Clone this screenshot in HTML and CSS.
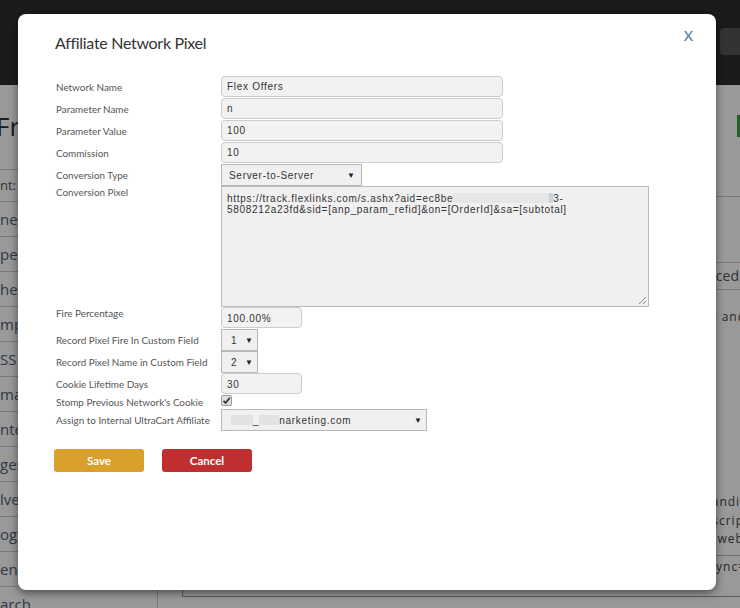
FILE: index.html
```html
<!DOCTYPE html>
<html>
<head>
<meta charset="utf-8">
<link rel="stylesheet" href="styles.css">
</head>
<body>
<div class="page">
  <header class="topbar"><div class="tb-btn"></div></header>
  <div class="layout">
    <aside class="sidebar">
      <div class="sb-title">Fro</div>
      <div class="sb-sub">ST</div>
      <div class="sb-field">nt: <span class="sb-input"></span></div>
      <ul class="sb-menu">
        <li>nera</li><li>pear</li><li>hem</li><li>mp</li><li>SS</li><li>mail</li>
        <li>nter</li><li>ges</li><li>lve</li><li>og F</li><li>enu</li><li>arch</li>
      </ul>
    </aside>
    <main class="main">
      <div class="main-head"><span class="green-btn"></span></div>
      <div class="main-gap"></div>
      <div class="tabs"><span class="tab">Advanced</span></div>
      <div class="main-text">Images and</div>
      <div class="main-lines">
        <div>Custom landing</div>
        <div>Custom scripts</div>
        <div>Custom web pages</div>
      </div>
      <div class="main-sync">Async=</div>
    </main>
  </div>
</div>
<div class="overlay"></div>
<div class="modal">
  <div class="modal-head">
    <h2 class="modal-title">Affiliate Network Pixel</h2>
    <span class="close">X</span>
  </div>
  <div class="form">
    <label class="lbl">Network Name</label>
    <div class="field wide">Flex Offers</div>
    <label class="lbl">Parameter Name</label>
    <div class="field wide">n</div>
    <label class="lbl">Parameter Value</label>
    <div class="field wide">100</div>
    <label class="lbl">Commission</label>
    <div class="field wide">10</div>
    <label class="lbl">Conversion Type</label>
    <div class="select conv"><span>Server-to-Server</span><span class="arrow">▼</span></div>
    <label class="lbl top">Conversion Pixel</label>
    <div class="textarea">https://track.flexlinks.com/s.ashx?aid=ec8be<span class="redact r1"></span><span class="sel"></span>3-<br>5808212a23fd&amp;sid=[anp_param_refid]&amp;on=[OrderId]&amp;sa=[subtotal]<svg class="grip" width="9" height="9" viewBox="0 0 9 9"><path d="M8 1L1 8M8 5L5 8" stroke="#888" stroke-width="1"/></svg></div>
    <label class="lbl top">Fire Percentage</label>
    <div class="field short">100.00%</div>
    <label class="lbl">Record Pixel Fire In Custom Field</label>
    <div class="select tiny"><span>1</span><span class="arrow">▼</span></div>
    <label class="lbl">Record Pixel Name in Custom Field</label>
    <div class="select tiny"><span>2</span><span class="arrow">▼</span></div>
    <label class="lbl">Cookie Lifetime Days</label>
    <div class="field short">30</div>
    <label class="lbl">Stomp Previous Network's Cookie</label>
    <div class="checkrow"><span class="check"><svg width="9" height="9" viewBox="0 0 9 9"><path d="M1.5 4.8L3.6 7L7.8 1.8" fill="none" stroke="#333" stroke-width="1.8"/></svg></span></div>
    <label class="lbl">Assign to Internal UltraCart Affiliate</label>
    <div class="select assign"><span class="assign-val"><span class="redact r2"></span><span class="under">_</span><span class="redact r3"></span>narketing.com</span><span class="arrow">▼</span></div>
  </div>
  <div class="actions">
    <button class="btn save">Save</button>
    <button class="btn cancel">Cancel</button>
  </div>
</div>
</body>
</html>
```

FILE: styles.css
```css
html, body {
  margin: 0;
  padding: 0;
}
body {
  width: 740px;
  height: 608px;
  overflow: hidden;
  background: #fff;
  font-family: "Open Sans", "Liberation Sans", sans-serif;
  position: relative;
}
.page {
  height: 608px;
  display: flex;
  flex-direction: column;
  overflow: hidden;
}
.topbar {
  height: 85px;
  background: #2e2e2e;
  display: flex;
  justify-content: flex-end;
  align-items: flex-start;
  flex-shrink: 0;
}
.tb-btn {
  width: 20px;
  height: 27px;
  margin-top: 28px;
  background: #555;
  border-radius: 4px 0 0 4px;
}
.layout {
  flex: 1;
  display: flex;
  overflow: hidden;
}
.sidebar {
  width: 157px;
  border-right: 1px solid #c8c8c8;
  color: #4f6275;
  overflow: hidden;
}
.sb-title {
  font-size: 26px;
  margin-top: 26px;
  margin-left: -4px;
  color: #333;
  line-height: 30px;
}
.sb-sub {
  font-size: 17px;
  color: #888;
  margin-left: 20px;
  line-height: 22px;
}
.sb-field {
  margin-top: 6px;
  padding: 3px 0 4px;
  border-top: 1px solid #ccc;
  border-bottom: 1px solid #ccc;
  font-size: 13px;
  color: #555;
  display: flex;
  align-items: center;
  gap: 4px;
}
.sb-input {
  width: 120px;
  height: 22px;
  border: 1px solid #aaa;
}
.sb-menu {
  list-style: none;
  margin: 0;
  padding: 0;
  font-size: 15px;
}
.sb-menu li {
  height: 34px;
  line-height: 34px;
  border-bottom: 1px solid #ccc;
}
.main {
  flex: 1;
  overflow: hidden;
  padding-left: 24px;
  display: flex;
  flex-direction: column;
}
.main-head {
  height: 111px;
  border-bottom: 1px solid #ccc;
  display: flex;
  justify-content: flex-end;
  align-items: flex-start;
  margin-left: -24px;
  flex-shrink: 0;
}
.green-btn {
  width: 3px;
  height: 22px;
  margin-top: 30px;
  background: #3aa04a;
}
.main-gap {
  height: 65px;
  border-bottom: 1px solid #ccc;
  margin-left: -24px;
  flex-shrink: 0;
}
.tabs {
  height: 26px;
  border-bottom: 1px solid #ccc;
  display: flex;
  justify-content: flex-end;
  margin-right: -3px;
  flex-shrink: 0;
}
.tab {
  font-size: 14px;
  color: #555;
  line-height: 26px;
  padding: 0 3px;
  border-left: 1px solid #ccc;
  border-right: 1px solid #ccc;
}
.main-text {
  font-size: 12px;
  color: #444;
  letter-spacing: 1px;
  margin-top: 18px;
  text-align: right;
  white-space: nowrap;
  margin-right: -6px;
}
.main-lines {
  margin-top: 168px;
  font-size: 12px;
  letter-spacing: 1px;
  color: #444;
  line-height: 18.5px;
  white-space: nowrap;
  border-bottom: 1px solid #bbb;
  padding-bottom: 6px;
  display: flex;
  flex-direction: column;
  align-items: flex-end;
}
.main-lines div:nth-child(1) { margin-right: -16px; }
.main-lines div:nth-child(2) { margin-right: -16px; }
.main-lines div:nth-child(3) { margin-right: -46px; }
.main-sync {
  font-size: 12px;
  color: #444;
  letter-spacing: 1px;
  white-space: nowrap;
  text-align: right;
  margin-right: -6px;
  padding: 2px 0 21px;
  border-bottom: 1px solid #999;
  border-left: 1px solid #999;
}
.overlay {
  position: absolute;
  inset: 0;
  background: rgba(0, 0, 0, 0.4);
}
.modal {
  position: absolute;
  left: 18px;
  top: 14px;
  width: 698px;
  height: 576px;
  box-sizing: border-box;
  background: #fff;
  border-radius: 8px;
  box-shadow: 0 3px 9px rgba(0, 0, 0, 0.5);
  padding: 0 37px 0 37px;
  font-family: Lato, "Open Sans", sans-serif;
}
.modal-head {
  height: 62px;
  position: relative;
}
.modal-title {
  margin: 0;
  padding-top: 19px;
  font-size: 16px;
  line-height: 20px;
  font-weight: 400;
  color: #333;
  letter-spacing: -0.3px;
}
.close {
  position: absolute;
  right: -14px;
  top: 11px;
  font-size: 15px;
  font-weight: 600;
  color: #6a8aa6;
  font-family: "Open Sans", sans-serif;
}
.form {
  display: grid;
  grid-template-columns: 165px auto;
  row-gap: 0;
  justify-items: start;
  padding-left: 1px;
}
.lbl {
  font-size: 9.9px;
  color: #555;
  align-self: center;
  line-height: 12px;
}
.lbl.top {
  align-self: start;
  padding-top: 0;
}
.field {
  height: 21px;
  margin-bottom: 1px;
  box-sizing: border-box;
  border: 1px solid #ccc;
  border-radius: 4px;
  background: #f2f2f2;
  padding: 0 5px;
  font-family: "Liberation Sans", Arial, sans-serif;
  font-size: 10px;
  color: #333;
  letter-spacing: 0.7px;
  display: flex;
  align-items: center;
}
.field.wide { width: 282px; }
.field.short { width: 81px; padding-top: 1px; }
.select {
  height: 22px;
  box-sizing: border-box;
  border: 1px solid #b8b8b8;
  background: #f0f0f0;
  padding: 0 6px 0 7px;
  font-family: "Liberation Sans", Arial, sans-serif;
  font-size: 10px;
  color: #333;
  letter-spacing: 0.7px;
  display: flex;
  align-items: center;
  justify-content: space-between;
}
.select.conv { width: 141px; }
.select.tiny { width: 37px; padding: 0 4px 0 9px; }
.select.assign { width: 206px; padding-right: 4px; }
.arrow {
  font-size: 8px;
  color: #222;
  letter-spacing: 0;
}
.textarea {
  width: 428px;
  height: 121px;
  box-sizing: border-box;
  border: 1px solid #bbb;
  background: #f0f0f0;
  padding: 6px 5px;
  font-family: "Liberation Sans", Arial, sans-serif;
  font-size: 10px;
  line-height: 11px;
  letter-spacing: 0.7px;
  color: #333;
  position: relative;
  white-space: nowrap;
}
.grip {
  position: absolute;
  right: 1px;
  bottom: 1px;
}
.redact {
  display: inline-block;
  height: 10px;
  background: #e6e6e6;
  vertical-align: -1px;
}
.r1 { width: 96px; }
.sel {
  display: inline-block;
  width: 4px;
  height: 10px;
  background: #c6d4e2;
  vertical-align: -1px;
}
.checkrow {
  height: 14px;
  display: flex;
  align-items: flex-start;
}
.check {
  width: 11px;
  height: 11px;
  box-sizing: border-box;
  border: 1px solid #999;
  border-radius: 2px;
  background: #e0e0e0;
  display: flex;
  align-items: center;
  justify-content: center;
}
.assign-val {
  display: flex;
  align-items: center;
  padding-left: 2px;
}
.r2 { width: 22px; background: #e2e2e2; }
.under { color: #333; }
.r3 { width: 20px; background: #e2e2e2; }
.actions {
  display: flex;
  gap: 18px;
  margin-top: 18px;
  margin-left: -1px;
}
.btn {
  width: 90px;
  height: 23px;
  border: none;
  border-radius: 3px;
  color: #fff;
  font-family: Lato, sans-serif;
  font-weight: 700;
  font-size: 11.5px;
  padding: 0;
}
.btn.save { background: #d9a02e; }
.btn.cancel { background: #bf2f2f; }
```
